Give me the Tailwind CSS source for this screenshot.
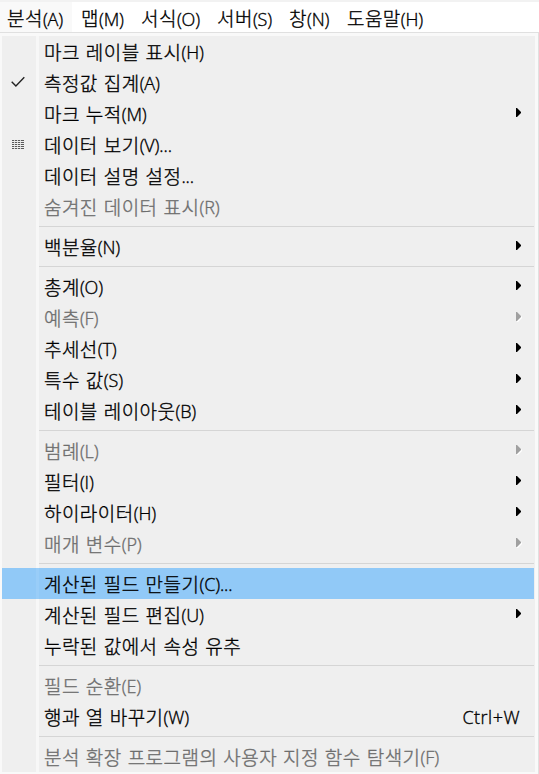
<!DOCTYPE html>
<html lang="ko">
<head>
  <meta charset="UTF-8" />
  <meta name="viewport" content="width=device-width, initial-scale=1.0"/>
  <title>분석 메뉴</title>
  <script src="https://cdn.jsdelivr.net/npm/@tailwindcss/browser@4"></script>
</head>
<body class="w-[539px] h-[774px] overflow-hidden bg-[#f9f9f9] text-black font-light whitespace-nowrap font-['Noto_Sans_CJK_KR',sans-serif] text-[19px] tracking-[0.45px] [word-spacing:0.2px] [-webkit-text-stroke:0.35px] [&_i]:not-italic [&_i]:font-['Open_Sans','Noto_Sans',sans-serif] [&_i]:text-[18px] [&_i]:tracking-[-0.15px]">

<!-- Shared icons -->
<svg class="hidden">
  <symbol id="arrow" viewBox="0 0 6 10"><path d="M0 0h1l4 4v1L1 9H0z" fill="currentColor"/></symbol>
</svg>

<!-- Menu bar -->
<nav class="flex h-[33px] bg-white border-t-2 border-t-[#f2f2f2] border-b border-b-[#e0e0e0] leading-[32px]">
  <div class="w-[72px] pl-[7px] bg-[#f9f9f9]">분석<i>(A)</i></div>
  <div class="w-[69px] pl-[9px]">맵<i>(M)</i></div>
  <div class="w-[76px]">서식<i>(O)</i></div>
  <div class="w-[72px]">서버<i>(S)</i></div>
  <div class="w-[58px]">창<i>(N)</i></div>
  <div>도움말<i>(H)</i></div>
</nav>

<!-- Dropdown -->
<div class="h-[741px] pl-[2px] pr-[3px] pt-[3px] border-r border-[#e0e0e0]">
  <div class="h-[736px] bg-[#efefef] leading-[31px] [&_i]:leading-[33px] [&>div]:flex [&>div]:h-[31px] [&>div]:w-[532px] [&>div>b]:flex [&>div>b]:shrink-0 [&>div>b]:w-[37px] [&>div>b]:mr-[5px] [&>div>b]:border-r-3 [&>div>b]:border-[#f7f7f7] [&>div>svg]:w-[6px] [&>div>svg]:h-[10px] [&>div>svg]:ml-auto [&>div>svg]:mr-[12px] [&>div>svg]:mt-[10px] [&>hr]:h-[9px] [&>hr]:border-0 [&>hr]:w-[532px] [&>hr]:bg-[linear-gradient(#d5d5d5,#d5d5d5),linear-gradient(#f7f7f7,#f7f7f7)] [&>hr]:bg-no-repeat [&>hr]:bg-[position:37px_4px,34px_0] [&>hr]:bg-[size:495px_1px,3px_9px]">
    <div><b></b>마크 레이블 표시<i>(H)</i></div>
    <div>
      <b><svg class="w-[14px] h-[12px] ml-[9px] mt-[9px]" viewBox="0 0 14 12" fill="none" stroke="#222" stroke-width="1.4"><path d="M.7 5.7l4.2 4.2L13.3 1.3"/></svg></b>
      측정값 집계<i>(A)</i>
    </div>
    <div><b></b>마크 누적<i>(M)</i><svg><use href="#arrow"/></svg></div>
    <div>
      <b><svg class="w-[12px] h-[10px] ml-[10px] mt-[11px]" viewBox="0 0 12 10" fill="none" stroke="#5a5a5a"><path d="M0 .5h12M0 2.5h12M0 4.5h12M0 6.5h12M0 8.5h12"/><path d="M2.5 0v10M5.5 0v10M8.5 0v10" stroke="#efefef" stroke-width=".8"/></svg></b>
      데이터 보기<i>(V)...</i>
    </div>
    <div><b></b>데이터 설명 설정<i>...</i></div>
    <div class="text-[#6d6d6d]"><b></b>숨겨진 데이터 표시<i>(R)</i></div>
    <hr>
    <div><b></b>백분율<i>(N)</i><svg><use href="#arrow"/></svg></div>
    <hr>
    <div><b></b>총계<i>(O)</i><svg><use href="#arrow"/></svg></div>
    <div class="text-[#6d6d6d]"><b></b>예측<i>(F)</i><svg class="text-[#a0a0a0] drop-shadow-[1px_1px_0_#fff]"><use href="#arrow"/></svg></div>
    <div><b></b>추세선<i>(T)</i><svg><use href="#arrow"/></svg></div>
    <div><b></b>특수 값<i>(S)</i><svg><use href="#arrow"/></svg></div>
    <div><b></b>테이블 레이아웃<i>(B)</i><svg><use href="#arrow"/></svg></div>
    <hr>
    <div class="text-[#6d6d6d]"><b></b>범례<i>(L)</i><svg class="text-[#a0a0a0] drop-shadow-[1px_1px_0_#fff]"><use href="#arrow"/></svg></div>
    <div><b></b>필터<i>(I)</i><svg><use href="#arrow"/></svg></div>
    <div><b></b>하이라이터<i>(H)</i><svg><use href="#arrow"/></svg></div>
    <div class="text-[#6d6d6d]"><b></b>매개 변수<i>(P)</i><svg class="text-[#a0a0a0] drop-shadow-[1px_1px_0_#fff]"><use href="#arrow"/></svg></div>
    <hr>
    <!-- Highlighted item -->
    <div class="bg-[#91c9f7]"><b class="border-[#99cdf8]!"></b>계산된 필드 만들기<i>(C)...</i></div>
    <div><b></b>계산된 필드 편집<i>(U)</i><svg><use href="#arrow"/></svg></div>
    <div><b></b>누락된 값에서 속성 유추</div>
    <hr>
    <div class="text-[#6d6d6d]"><b></b>필드 순환<i>(E)</i></div>
    <div><b></b>행과 열 바꾸기<i>(W)</i><i class="ml-auto mr-[14px] tracking-[0.5px]!">Ctrl+W</i></div>
    <hr>
    <div class="text-[#6d6d6d]"><b></b>분석 확장 프로그램의 사용자 지정 함수 탐색기<i>(F)</i></div>
  </div>
</div>

</body>
</html>
